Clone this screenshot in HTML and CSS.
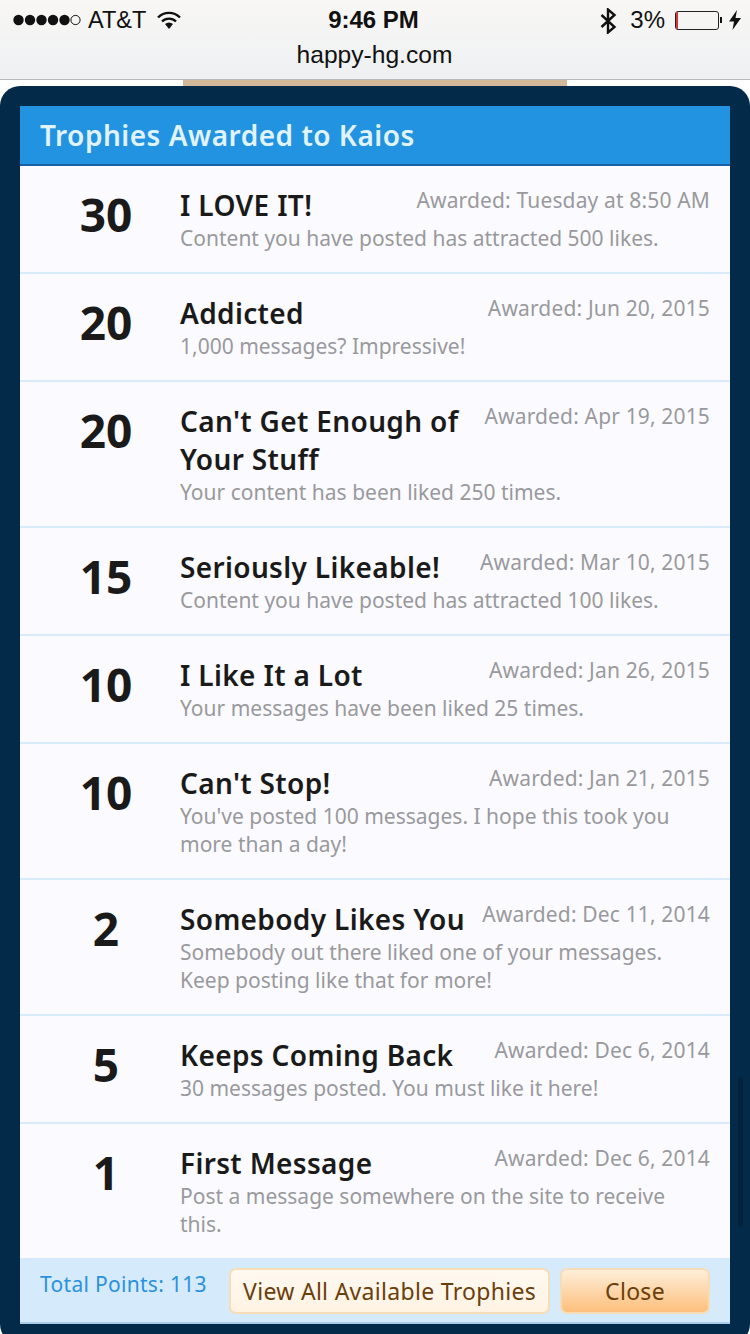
FILE: index.html
```html
<!DOCTYPE html>
<html lang="en">
<head>
  <meta charset="UTF-8">
  <title>Trophies Awarded to Kaios</title>
  <link rel="stylesheet" href="styles.css">
</head>
<body>

<div class="browser-bar">
  <div class="status">
    <div class="status-left">
      <svg class="signal" width="68" height="12" viewBox="0 0 68 12">
        <circle cx="5.5" cy="6" r="5.2"/>
        <circle cx="17" cy="6" r="5.2"/>
        <circle cx="28.5" cy="6" r="5.2"/>
        <circle cx="40" cy="6" r="5.2"/>
        <circle cx="51.5" cy="6" r="5.2"/>
        <circle cx="62.5" cy="6" r="4.6" fill="none" stroke="#111" stroke-width="1"/>
      </svg>
      <span class="carrier">AT&amp;T</span>
      <svg class="wifi" width="24" height="18" viewBox="0 0 24 18">
        <path d="M1 6.5a15.500 15.500 0 0 1 22 0" fill="none" stroke="#111" stroke-width="2.400"/>
        <path d="M5 10.500a10 10 0 0 1 14 0" fill="none" stroke="#111" stroke-width="2.400"/>
        <path d="M8 13a6 6 0 0 1 8 0l-4 5z" fill="#111"/>
      </svg>
    </div>
    <div class="clock">9:46 PM</div>
    <div class="status-right">
      <svg class="bt" width="17" height="26" viewBox="0 0 17 26">
        <path d="M1.500 7l13 12-6.500 5.500v-23l6.500 5.500-13 12" fill="none" stroke="#111" stroke-width="2.400"/>
      </svg>
      <span class="percent">3%</span>
      <div class="battery"><div class="battery-level"></div></div>
      <div class="battery-nub"></div>
      <svg class="bolt" width="12" height="20" viewBox="0 0 12 20">
        <path d="M8 0L0 11.500h5L3.500 20 12 8H6.500z" fill="#111"/>
      </svg>
    </div>
  </div>
  <div class="url">happy-hg.com</div>
</div>

<div class="page-strip"><div class="page-strip-tan"></div></div>

<div class="overlay">
  <h2 class="overlay-title">Trophies Awarded to Kaios</h2>

  <ul class="trophies">
    <li class="trophy">
      <div class="points">30</div>
      <div class="info">
        <div class="awarded">Awarded: Tuesday at 8:50 AM</div>
        <h3>I LOVE IT!</h3>
        <p>Content you have posted has attracted 500 likes.</p>
      </div>
    </li>
    <li class="trophy">
      <div class="points">20</div>
      <div class="info">
        <div class="awarded">Awarded: Jun 20, 2015</div>
        <h3>Addicted</h3>
        <p>1,000 messages? Impressive!</p>
      </div>
    </li>
    <li class="trophy">
      <div class="points">20</div>
      <div class="info">
        <div class="awarded">Awarded: Apr 19, 2015</div>
        <h3>Can't Get Enough of Your Stuff</h3>
        <p>Your content has been liked 250 times.</p>
      </div>
    </li>
    <li class="trophy">
      <div class="points">15</div>
      <div class="info">
        <div class="awarded">Awarded: Mar 10, 2015</div>
        <h3>Seriously Likeable!</h3>
        <p>Content you have posted has attracted 100 likes.</p>
      </div>
    </li>
    <li class="trophy">
      <div class="points">10</div>
      <div class="info">
        <div class="awarded">Awarded: Jan 26, 2015</div>
        <h3>I Like It a Lot</h3>
        <p>Your messages have been liked 25 times.</p>
      </div>
    </li>
    <li class="trophy">
      <div class="points">10</div>
      <div class="info">
        <div class="awarded">Awarded: Jan 21, 2015</div>
        <h3>Can't Stop!</h3>
        <p>You've posted 100 messages. I hope this took you more than a day!</p>
      </div>
    </li>
    <li class="trophy">
      <div class="points">2</div>
      <div class="info">
        <div class="awarded">Awarded: Dec 11, 2014</div>
        <h3>Somebody Likes You</h3>
        <p>Somebody out there liked one of your messages. Keep posting like that for more!</p>
      </div>
    </li>
    <li class="trophy">
      <div class="points">5</div>
      <div class="info">
        <div class="awarded">Awarded: Dec 6, 2014</div>
        <h3>Keeps Coming Back</h3>
        <p>30 messages posted. You must like it here!</p>
      </div>
    </li>
    <li class="trophy">
      <div class="points">1</div>
      <div class="info">
        <div class="awarded">Awarded: Dec 6, 2014</div>
        <h3>First Message</h3>
        <p>Post a message somewhere on the site to receive this.</p>
      </div>
    </li>
  </ul>

  <div class="overlay-footer">
    <div class="total">Total Points: 113</div>
    <button class="btn">View All Available Trophies</button>
    <button class="btn btn-primary">Close</button>
  </div>
</div>

<div class="scroll-thumb"></div>

</body>
</html>
```

FILE: styles.css
```css
html, body {
  margin: 0;
  height: 1334px;
  overflow: hidden;
}

body {
  background: #fff;
  font-family: "Noto Sans", Arial, sans-serif;
}

/* browser chrome */
.browser-bar {
  height: 79px;
  background: linear-gradient(#f8f7f5, #eef0f2);
  border-bottom: 1px solid #b9b9b9;
  font-family: "Liberation Sans", Arial, sans-serif;
  color: #111;
}

.status {
  display: grid;
  grid-template-columns: 1fr auto 1fr;
  align-items: center;
  height: 40px;
  padding: 0 9px 0 6px;
  font-size: 24px;
}

.status-left, .status-right {
  display: flex;
  align-items: center;
}

.status-left {
  padding-left: 7px;
}

.status-right {
  justify-content: flex-end;
}

.signal {
  fill: #111;
}

.carrier {
  margin-left: 7px;
  font-size: 23.5px;
}

.wifi {
  margin-left: 11px;
}

.clock {
  font-weight: bold;
}

.percent {
  margin-left: 13px;
}

.bt {
  margin-top: 1px;
}

.battery {
  width: 42px;
  height: 17px;
  margin-left: 10px;
  border: 1px solid #222;
  border-radius: 3px;
}

.battery-level {
  width: 2px;
  height: 100%;
  background: #d0393c;
}

.battery-nub {
  width: 2px;
  height: 6px;
  margin-left: 1px;
  background: #111;
}

.bolt {
  margin-left: 7px;
}

.url {
  text-align: center;
  font-size: 24.6px;
  line-height: 30px;
  padding-right: 1px;
}

.page-strip {
  display: flex;
  justify-content: center;
  height: 6px;
}

.page-strip-tan {
  width: 384px;
  background: #d3b99b;
}

/* trophy overlay */
.overlay {
  padding: 20px;
  background: #032b49;
  border-radius: 20px;
}

.overlay-title {
  margin: 0;
  height: 58px;
  padding-left: 20px;
  background: #2293e0;
  border-bottom: 2px solid #1a62a8;
  color: #e0f3ff;
  font-size: 28px;
  font-weight: 600;
  letter-spacing: 0.5px;
  line-height: 58px;
}

.trophies {
  margin: 0;
  padding: 0;
  list-style: none;
  background: #fbfbff;
}

.trophy {
  display: flex;
  padding: 20px;
  border-bottom: 2px solid #d7ebfa;
}

.trophy:last-child {
  border-bottom: 0;
}

.points {
  flex: none;
  width: 132px;
  margin-right: 8px;
  color: #1a1a1a;
  font-size: 46px;
  font-weight: bold;
  line-height: 56px;
  text-align: center;
}

.info {
  flex: 1;
}

.awarded {
  float: right;
  margin-left: 16px;
  color: #99999d;
  font-size: 21px;
  letter-spacing: 0.15px;
  line-height: 28px;
}

.info h3 {
  margin: 0;
  color: #1a1a1a;
  font-size: 28px;
  font-weight: 600;
  letter-spacing: 0.35px;
  line-height: 38px;
}

.info p {
  margin: 0;
  color: #99999d;
  font-size: 21px;
  line-height: 28px;
}

.overlay-footer {
  display: flex;
  align-items: flex-start;
  height: 54px;
  padding: 10px 20px 0;
  background: #d5eafa;
  border-bottom: 2px solid #a9cde8;
}

.total {
  flex: 1;
  color: #2a92dc;
  font-size: 21px;
  letter-spacing: 0.3px;
  line-height: 32px;
}

.btn {
  height: 46px;
  padding: 0 12px;
  background: linear-gradient(#fff9f1, #fff3e3);
  border: 2px solid #f7dcb8;
  border-radius: 7px;
  color: #6a3f0b;
  font-family: inherit;
  font-size: 23px;
  letter-spacing: 0.3px;
}

.btn-primary {
  width: 150px;
  margin-left: 10px;
  background: linear-gradient(#feeed9, #fdbf7c);
}

.scroll-thumb {
  position: absolute;
  left: 738px;
  top: 1077px;
  width: 5px;
  height: 150px;
  background: #02223b;
  border-radius: 3px;
}
```
